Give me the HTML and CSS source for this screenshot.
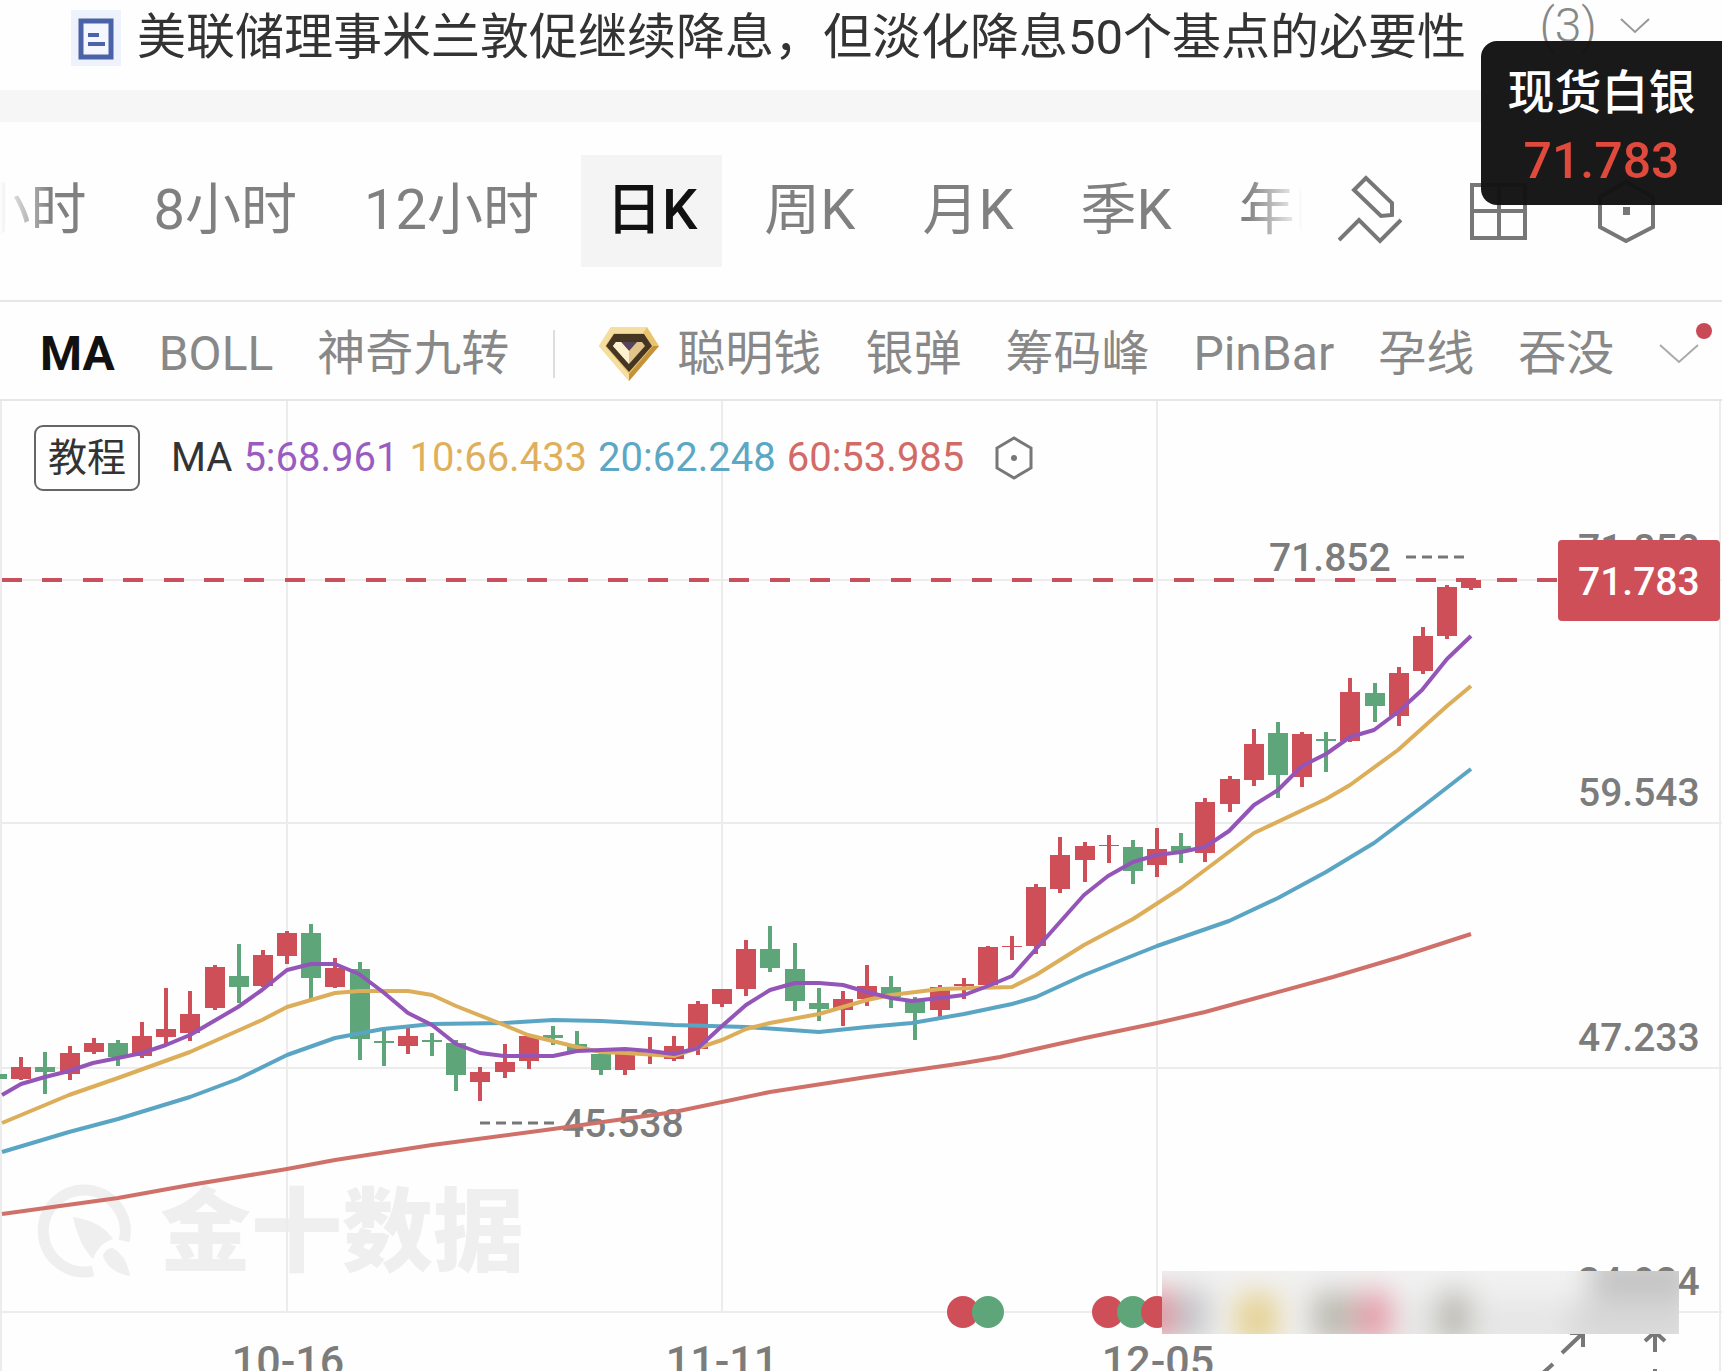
FILE: index.html
```
<!DOCTYPE html>
<html lang="zh-CN">
<head>
  <meta charset="UTF-8">
  <meta name="viewport" content="width=device-width, initial-scale=1.0">
  <title>现货白银 日K</title>
  <link rel="stylesheet" href="styles.css">
</head>
<body>

  <header class="news">
    <svg class="news-icon" viewBox="0 0 50 56">
      <rect width="50" height="56" fill="#eef2fc"/>
      <rect x="10" y="11" width="30" height="36" fill="#f4f7ff" stroke="#4a62a8" stroke-width="5"/>
      <path d="M17 25h11M17 34h17" stroke="#4a62a8" stroke-width="4"/>
    </svg>
    <a href="#" class="news-title">美联储理事米兰敦促继续降息，但淡化降息50个基点的必要性</a>
    <button class="news-more">(3)
      <svg width="32" height="18" viewBox="0 0 32 18"><path d="M2 2l14 13L30 2" fill="none" stroke="#999" stroke-width="2"/></svg>
    </button>
  </header>

  <div class="price-tip">
    <span>现货白银</span>
    <span class="price-tip-value">71.783</span>
  </div>

  <nav class="periods">
    <div class="period-list">
      <button>4小时</button>
      <button>8小时</button>
      <button>12小时</button>
      <button class="active">日K</button>
      <button>周K</button>
      <button>月K</button>
      <button>季K</button>
      <button>年K</button>
    </div>
    <div class="tools">
      <button aria-label="画线">
        <svg width="64" height="72" viewBox="0 0 64 72"><path d="M28 3L16 15l27 26 11-1V28zM1 65l20-20 21 21 21-21" fill="none" stroke="#777" stroke-width="4"/></svg>
      </button>
      <button aria-label="布局">
        <svg width="64" height="72" viewBox="0 0 64 72"><path d="M6 10h53v53H6zM33 10v53M6 36h53" fill="none" stroke="#777" stroke-width="4"/></svg>
      </button>
      <button aria-label="设置">
        <svg width="64" height="72" viewBox="0 0 64 72"><path d="M32 7l27 15v30L32 66 6 52V22z" fill="none" stroke="#777" stroke-width="4"/><rect x="29" y="32" width="7" height="8" fill="#777"/></svg>
      </button>
    </div>
  </nav>

  <nav class="indicators">
    <button class="active">MA</button>
    <button>BOLL</button>
    <button>神奇九转</button>
    <i class="divider"></i>
    <button class="vip">
      <svg width="60" height="54" viewBox="0 0 60 54">
        <path d="M12 0h36l12 19-30 35L0 19z" fill="#e9c46c"/>
        <path d="M12 0h36l-4 6H15L6 19l24 28v7L0 19z" fill="#f5dea0"/>
        <path d="M60 19L30 54v-7l24-28z" fill="#c5923c"/>
        <path d="M15 7h30l8 12-23 26L7 19z" fill="#443622"/>
        <path d="M17 15h26l3 4-16 18-16-18z" fill="#e3c58c"/>
        <path d="M22 15h16l-8 9z" fill="#57435a"/>
        <path d="M22 15l8 9v13L14 19l3-4z" fill="#fff0cf"/>
      </svg>
      聪明钱
    </button>
    <button>银弹</button>
    <button>筹码峰</button>
    <button>PinBar</button>
    <button>孕线</button>
    <button>吞没</button>
    <button class="more" aria-label="更多">
      <svg width="42" height="22" viewBox="0 0 42 22"><path d="M2 2l19 17L40 2" fill="none" stroke="#aaa" stroke-width="2"/></svg>
    </button>
  </nav>

  <main class="chart">
    <div class="legend">
      <button class="guide">教程</button>
      <div class="legend-values">
        <span>MA</span>
        <span class="ma5">5:68.961</span>
        <span class="ma10">10:66.433</span>
        <span class="ma20">20:62.248</span>
        <span class="ma60">60:53.985</span>
      </div>
      <svg width="40" height="44" viewBox="0 0 40 44"><path d="M20 2l17 10v20L20 42 3 32V12z" fill="none" stroke="#777" stroke-width="3"/><circle cx="20" cy="22" r="3" fill="#777"/></svg>
    </div>

    <svg class="plot" viewBox="0 401 1722 970">
      <defs>
        <filter id="soft" x="-20%" y="-50%" width="140%" height="200%"><feGaussianBlur stdDeviation="14"/></filter>
        <clipPath id="strip"><rect x="1162" y="1271" width="517" height="63"/></clipPath>
      </defs>

      <!-- watermark -->
      <g fill="#efefef">
        <path d="M93 1271A41 41 0 1 1 124 1241" fill="none" stroke="#efefef" stroke-width="11"/>
        <path d="M73 1217q28 4 40 22-14 4-20 20-14-14-20-42z"/>
        <path d="M103 1256q2-8 10-8 14 8 17 28-22-4-27-20z"/>
        <text class="watermark" x="160" y="1264">金十数据</text>
      </g>

      <path class="grid" d="M1 401V1371M1720 401V1371M287 401V1312M722 401V1312M1157 401V1312M0 580H1722M0 823H1722M0 1068H1722M0 1312H1722"/>

      <g class="label">
        <text x="1578" y="562">71.852</text>
        <text x="1578" y="806">59.543</text>
        <text x="1578" y="1051">47.233</text>
        <text x="1578" y="1295">34.924</text>
        <text x="1269" y="571">71.852</text>
        <text x="562" y="1137">45.538</text>
      </g>
      <g class="label date" text-anchor="middle">
        <text x="288" y="1376">10-16</text>
        <text x="722" y="1376">11-11</text>
        <text x="1158" y="1376">12-05</text>
      </g>
      <path class="leader" d="M1406 557h60M480 1123h76"/>

      <path class="last-line" d="M2 580H1558"/>
      <g id="candles"></g>
      <g id="lines"></g>

      <rect x="1558" y="540" width="162" height="81" rx="4" fill="#cf4f58"/>
      <text class="last-price" x="1578" y="595">71.783</text>

      <circle cx="963" cy="1312" r="16" class="up"/>
      <circle cx="988" cy="1312" r="16" class="down"/>
      <circle cx="1108" cy="1312" r="16" class="up"/>
      <circle cx="1133" cy="1312" r="16" class="down"/>
      <circle cx="1157" cy="1312" r="16" class="up"/>

      <!-- zoom arrows -->
      <path d="M1562 1353l21-20M1570 1333h13v14M1553 1364l-20 18M1655 1352v-20M1645 1341l10-9 10 9M1655 1369v8" fill="none" stroke="#777" stroke-width="4"/>

      <!-- blurred strip -->
      <g clip-path="url(#strip)">
        <rect x="1162" y="1271" width="517" height="63" fill="#f1f1f1"/>
        <g filter="url(#soft)">
          <rect x="1400" y="1300" width="300" height="50" fill="#e6e6e6"/>
          <rect x="1140" y="1290" width="32" height="50" fill="#e58c98"/>
          <rect x="1172" y="1290" width="36" height="50" fill="#c4c4c8"/>
          <rect x="1236" y="1294" width="42" height="50" fill="#e5d193"/>
          <rect x="1312" y="1292" width="44" height="50" fill="#bdbbb2"/>
          <rect x="1358" y="1292" width="34" height="50" fill="#e59ba9"/>
          <rect x="1438" y="1292" width="32" height="50" fill="#bab9b0"/>
          <rect x="1590" y="1256" width="104" height="56" fill="#c4c4c4"/>
          <rect x="1570" y="1300" width="120" height="50" fill="#d8d8d8"/>
        </g>
      </g>
    </svg>
  </main>

  <script src="chart.js"></script>
</body>
</html>
```

FILE: styles.css
```
* {
  box-sizing: border-box;
}
body {
  margin: 0;
  background: #fefefe;
  color: #333;
  font-family: Roboto, "Noto Sans CJK SC", sans-serif;
  line-height: 1.2;
  overflow: hidden;
}
button {
  padding: 0;
  border: none;
  background: none;
  color: inherit;
  font: inherit;
  white-space: nowrap;
  cursor: pointer;
}
svg {
  display: block;
  flex-shrink: 0;
}
.news {
  display: flex;
  align-items: center;
  height: 122px;
  padding: 10px 71px 24px;
  border-bottom: 32px solid #f6f6f6;
}
.news-icon {
  width: 50px;
  height: 56px;
}
.news-title {
  flex: 1;
  margin-left: 16px;
  color: #333;
  font-size: 49px;
  line-height: 56px;
  text-decoration: none;
  white-space: nowrap;
}
.news-more {
  display: flex;
  align-items: center;
  align-self: flex-start;
  gap: 22px;
  color: #888;
  font-size: 48px;
  font-weight: 300;
  line-height: 32px;
}
.price-tip {
  position: absolute;
  top: 41px;
  right: 0;
  display: flex;
  flex-direction: column;
  align-items: center;
  width: 241px;
  height: 164px;
  padding: 20px 0 0;
  border-radius: 16px 0 0 16px;
  background: rgba(18, 18, 18, 0.97);
  color: #fff;
  font-size: 47px;
  font-weight: 500;
  line-height: 64px;
}
.price-tip-value {
  color: #e04a3c;
  font-size: 50px;
  line-height: 72px;
}
.periods {
  display: flex;
  align-items: center;
  height: 180px;
  padding-right: 64px;
  border-bottom: 2px solid #e6e6e6;
  color: #808080;
  font-size: 56px;
}
.period-list {
  flex: 1;
  display: flex;
  gap: 17px;
  min-width: 0;
  margin-right: 35px;
  overflow: hidden;
  -webkit-mask-image: linear-gradient(90deg, transparent, #000 50px, #000 calc(100% - 56px), transparent);
  mask-image: linear-gradient(90deg, transparent, #000 50px, #000 calc(100% - 56px), transparent);
}
.period-list button {
  flex-shrink: 0;
  height: 112px;
  padding: 0 25px;
}
.period-list button:first-child {
  margin-left: -82px;
}
.period-list .active {
  background: #f4f4f4;
  color: #111;
  font-weight: 500;
}
.tools {
  display: flex;
  gap: 64px;
}
.indicators {
  display: flex;
  align-items: center;
  gap: 44px;
  height: 99px;
  padding: 6px 26px 0 40px;
  border-bottom: 2px solid #e6e6e6;
  color: #888;
  font-size: 48px;
}
.indicators .active {
  color: #111;
  font-weight: 700;
}
.divider {
  flex-shrink: 0;
  width: 2px;
  height: 48px;
  background: #ddd;
}
.vip {
  display: flex;
  align-items: center;
  gap: 18px;
}
.more {
  position: relative;
  margin-left: auto;
}
.more::after {
  content: "";
  position: absolute;
  top: -20px;
  right: -12px;
  width: 16px;
  height: 16px;
  border-radius: 50%;
  background: #c94a57;
}
.chart {
  position: relative;
}
.legend {
  position: absolute;
  top: 24px;
  left: 34px;
  display: flex;
  align-items: center;
  font-size: 40px;
}
.guide {
  width: 106px;
  height: 66px;
  margin-right: 31px;
  border: 2px solid #666;
  border-radius: 9px;
  font-size: 39px;
}
.legend-values {
  display: flex;
  gap: 11px;
  margin-right: 30px;
}
.ma5 { color: #9a5cc0; }
.ma10 { color: #dfb05c; }
.ma20 { color: #5ba7c4; }
.ma60 { color: #d26a66; }
.plot {
  width: 100%;
}
.watermark {
  font-size: 91px;
  font-weight: 900;
}
.grid {
  fill: none;
  stroke: #ececec;
  stroke-width: 2;
}
.label,
.last-price {
  fill: #7c7c7c;
  font-size: 39px;
  font-weight: 500;
}
.date {
  font-size: 43px;
}
.last-price {
  fill: #fff;
}
.leader {
  stroke: #777;
  stroke-width: 3;
  stroke-dasharray: 10 6;
}
.last-line {
  stroke: #c9505c;
  stroke-width: 4;
  stroke-dasharray: 20 20 20 21 20 20 20 21 20 20;
}
.up {
  fill: #cf4f58;
}
.down {
  fill: #5ea679;
}
#lines polyline {
  fill: none;
  stroke-width: 4;
  stroke-linejoin: round;
}
```

FILE: chart.js
```
// up/down, high, body top, body bottom, low
const candles = [
  ['down', 1074, 1074, 1079, 1079], ['up', 1057, 1067, 1079, 1080], ['down', 1052, 1067, 1072, 1094],
  ['up', 1046, 1053, 1074, 1080], ['up', 1038, 1043, 1052, 1054], ['down', 1040, 1043, 1057, 1066],
  ['up', 1022, 1036, 1056, 1058], ['up', 988, 1029, 1037, 1046], ['up', 991, 1014, 1033, 1041],
  ['up', 965, 967, 1008, 1010], ['down', 944, 976, 987, 1003], ['up', 950, 955, 986, 987],
  ['up', 931, 933, 956, 964], ['down', 924, 933, 978, 999], ['up', 958, 968, 987, 988],
  ['down', 962, 969, 1039, 1060], ['down', 1030, 1041, 1043, 1066], ['up', 1028, 1036, 1046, 1054],
  ['down', 1033, 1040, 1042, 1056], ['down', 1040, 1043, 1075, 1091], ['up', 1067, 1072, 1082, 1101],
  ['up', 1044, 1062, 1072, 1078], ['up', 1035, 1036, 1061, 1069], ['down', 1026, 1035, 1038, 1045],
  ['down', 1031, 1044, 1051, 1053], ['down', 1052, 1054, 1070, 1075], ['up', 1049, 1053, 1070, 1075],
  ['up', 1037, 1053, 1055, 1064], ['up', 1036, 1046, 1059, 1061], ['up', 1001, 1004, 1049, 1055],
  ['up', 989, 989, 1004, 1007], ['up', 940, 949, 989, 996], ['down', 926, 949, 968, 972],
  ['down', 943, 969, 1001, 1011], ['down', 988, 1003, 1009, 1021], ['up', 991, 999, 1010, 1026],
  ['up', 965, 986, 999, 1006], ['down', 976, 987, 997, 1008], ['down', 997, 1001, 1013, 1040],
  ['up', 985, 987, 1010, 1017], ['up', 978, 984, 986, 999], ['up', 946, 947, 985, 986],
  ['up', 936, 946, 947, 960], ['up', 884, 887, 946, 954], ['up', 837, 855, 889, 893],
  ['up', 842, 846, 860, 882], ['up', 835, 845, 846, 863], ['down', 840, 847, 871, 884],
  ['up', 828, 849, 865, 877], ['down', 833, 846, 851, 863], ['up', 798, 802, 853, 862],
  ['up', 776, 779, 804, 812], ['up', 729, 744, 780, 786], ['down', 722, 733, 775, 798],
  ['up', 732, 734, 777, 787], ['down', 732, 739, 741, 772], ['up', 678, 692, 741, 742],
  ['down', 683, 693, 706, 722], ['up', 667, 673, 716, 726], ['up', 627, 636, 671, 674],
  ['up', 585, 587, 636, 639], ['up', 579, 580, 588, 590]
];

const averages = {
  '#cf7069': '2,1214 118,1198 190,1185 287,1169 335,1160 432,1145 553,1129 674,1112 770,1092 867,1077 964,1063 1000,1057 1085,1038 1157,1023 1205,1012 1260,997 1333,977 1400,957 1471,934',
  '#5ba5c4': '2,1152 69,1132 118,1119 190,1097 238,1079 287,1055 335,1038 383,1029 432,1024 504,1023 553,1020 601,1021 674,1025 746,1027 819,1032 867,1027 912,1023 964,1014 1012,1004 1036,997 1084,975 1157,946 1229,921 1278,898 1326,872 1374,843 1422,807 1471,769',
  '#dcae5a': '2,1123 69,1095 118,1078 190,1052 262,1020 287,1007 335,993 359,991 408,991 432,995 456,1006 504,1025 528,1035 577,1047 601,1052 625,1053 674,1056 698,1048 722,1040 746,1029 770,1023 819,1014 867,1000 891,995 940,989 1012,987 1036,975 1084,945 1133,919 1181,888 1229,852 1254,833 1326,799 1350,785 1398,750 1447,706 1471,686',
  '#9455b8': '2,1095 21,1084 45,1077 69,1071 93,1063 118,1058 142,1053 166,1045 190,1035 214,1021 238,1007 262,990 287,970 311,964 335,964 359,974 383,992 408,1013 432,1025 456,1044 480,1053 504,1056 553,1056 577,1051 601,1050 625,1049 650,1051 674,1054 698,1048 722,1026 746,1005 770,990 795,983 819,983 843,985 867,992 891,998 912,1001 940,998 964,995 988,986 1012,976 1036,949 1060,922 1084,895 1108,876 1133,862 1157,855 1181,852 1205,847 1229,831 1254,805 1278,790 1302,766 1326,754 1350,737 1374,730 1398,712 1422,690 1447,659 1471,636'
};

const firstX = -3;
const step = 1450 / 60;

document.getElementById('candles').innerHTML = candles.map(([type, high, top, bottom, low], i) => {
  const x = Math.round(firstX + i * step);
  return `<rect class="${type}" x="${x - 10}" y="${top}" width="20" height="${bottom - top}"/>
    <rect class="${type}" x="${x - 2}" y="${high}" width="4" height="${low - high}"/>`;
}).join('');

document.getElementById('lines').innerHTML = Object.entries(averages)
  .map(([color, points]) => `<polyline points="${points}" stroke="${color}"/>`)
  .join('');
```
